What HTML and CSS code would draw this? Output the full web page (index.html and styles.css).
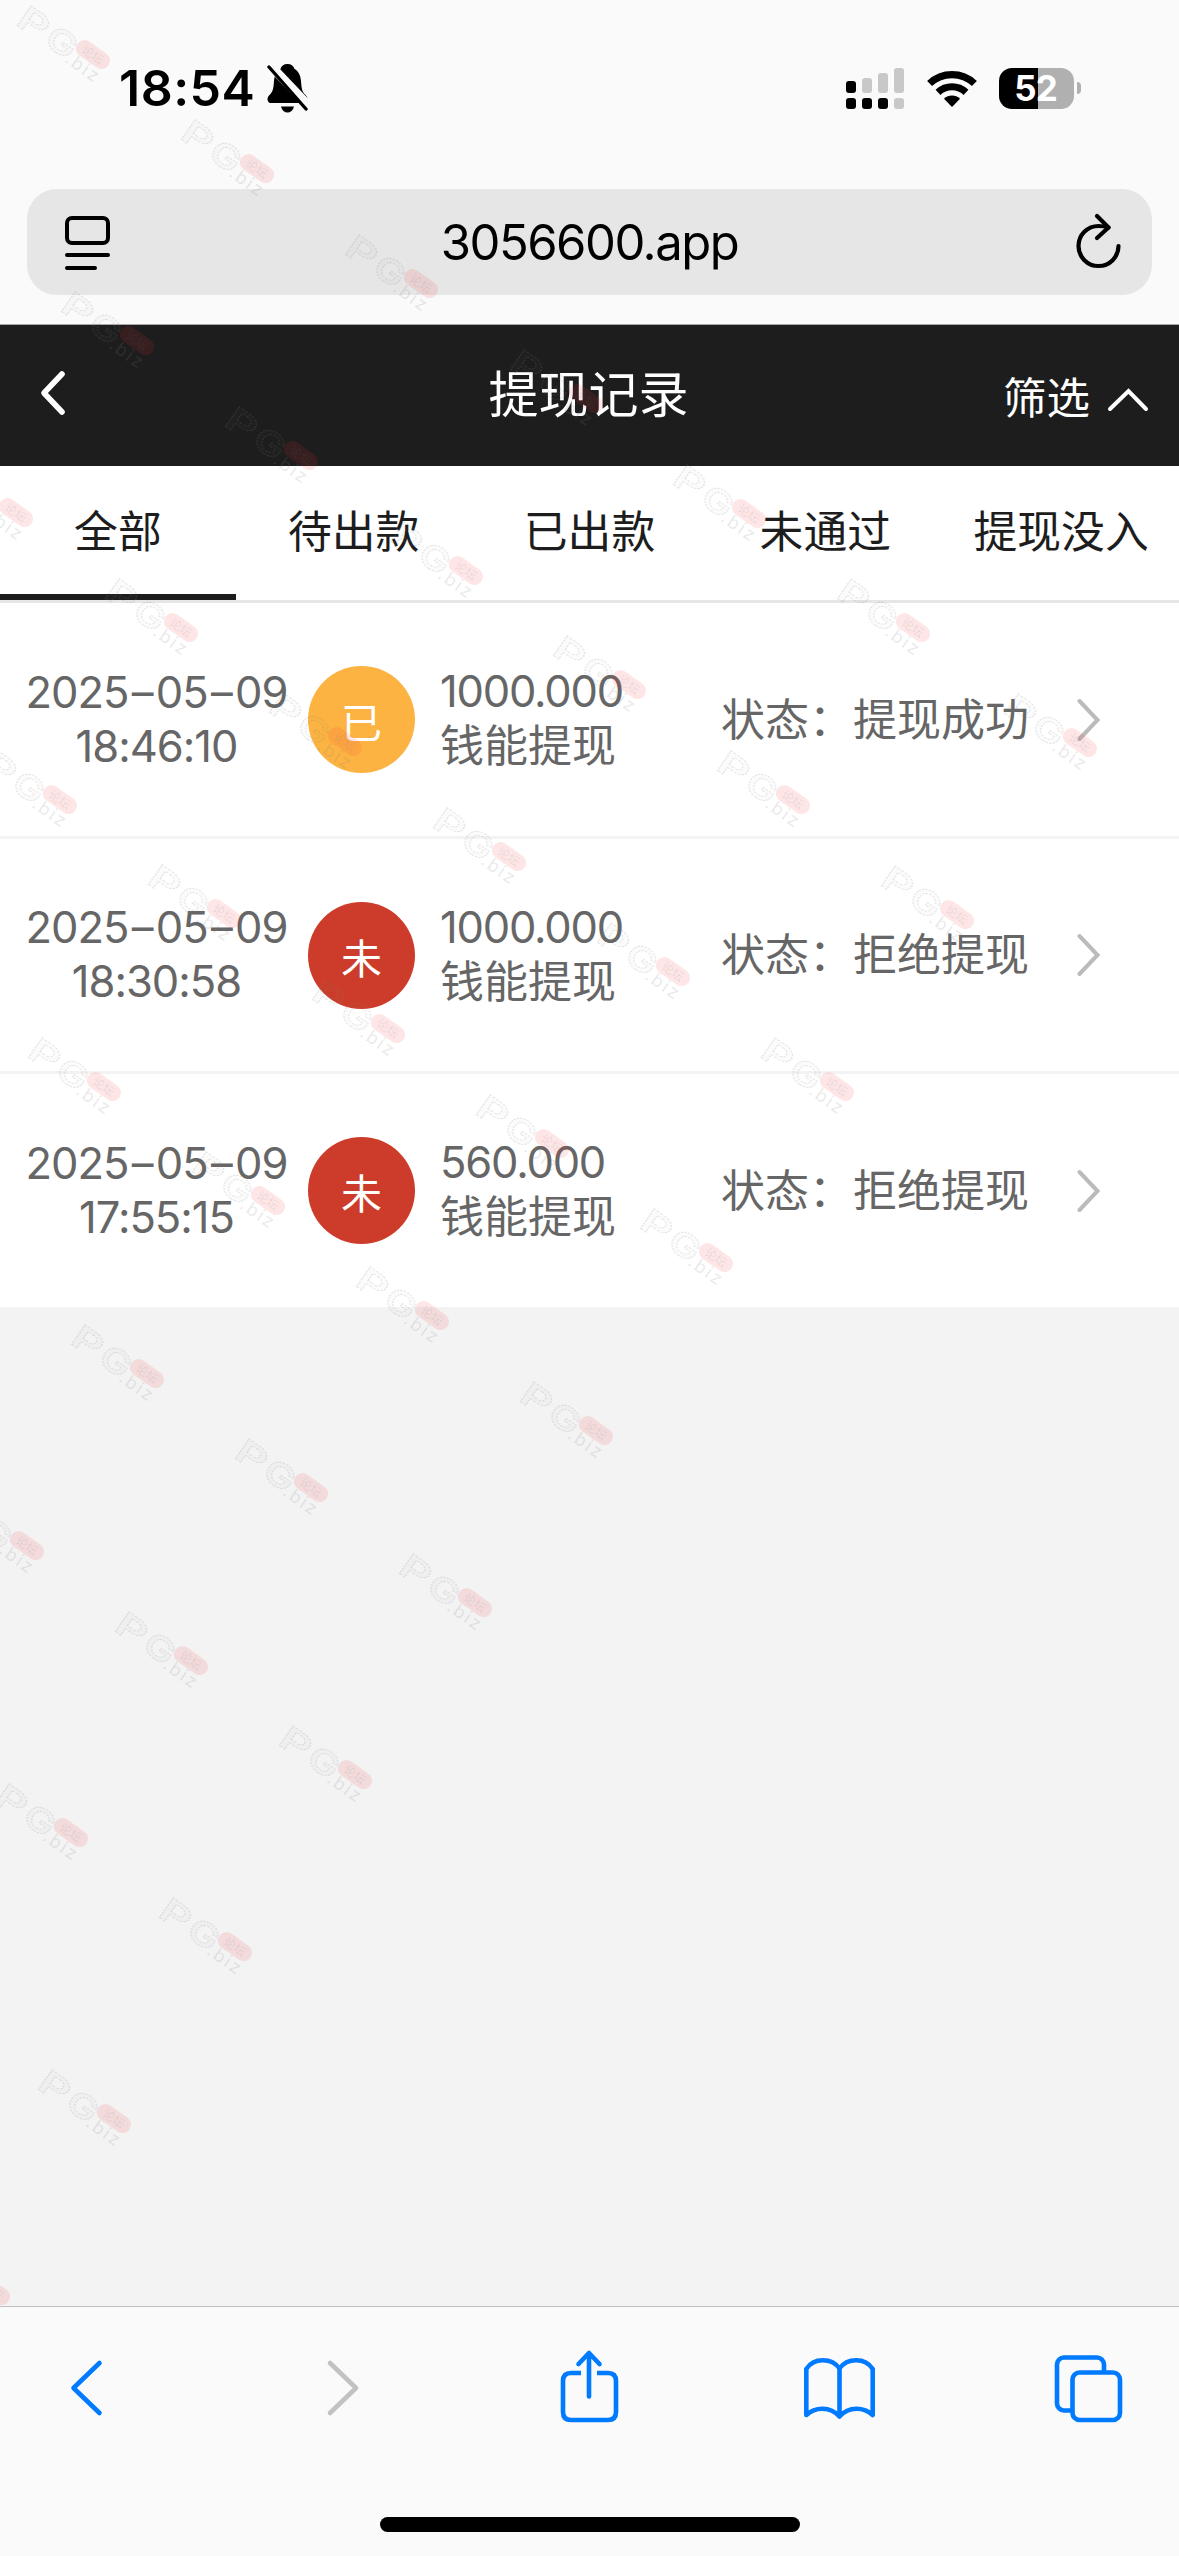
FILE: index.html
```html
<!DOCTYPE html>
<html lang="zh-CN">
<head>
<meta charset="utf-8">
<title>提现记录</title>
<link rel="stylesheet" href="styles.css">
</head>
<body>
<div class="screen">
  <header class="browser-top">
    <div class="status-bar">
      <div class="clock">18:54</div>
      <svg class="bell" viewBox="0 0 42 49" width="42" height="49">
        <path d="M20.500 0c-4 0-6.200 2-7 5-4 2-6 6.500-6.500 12-.5 7-1 10-3.500 13-2 2-3 3.200-3 5 0 2 1 4 3 4h34c2 0 3-2 3-4 0-1.800-1-3-3-5-2.500-3-3-6-3.500-13-.5-5.500-2.500-10-6.500-12-.8-3-3-5-7-5z"/>
        <path d="M14 42.500h13c-1 4-3.500 6-6.500 6s-5.500-2-6.500-6z"/>
        <path d="M2 0L42 42" stroke="#fafafa" stroke-width="9"/>
        <path d="M2 3L39 45" stroke="#000" stroke-width="3.400" stroke-linecap="round"/>
      </svg>
      <div class="indicators">
        <svg viewBox="0 0 58 41" width="58" height="41">
          <g fill="#c8c8c8"><rect x="16" y="10" width="10" height="15" rx="3"/><rect x="32" y="5" width="10" height="20" rx="3"/><rect x="48" y="0" width="10" height="25" rx="3"/><rect x="48" y="30" width="10" height="11" rx="3"/></g>
          <rect x="0" y="13" width="10" height="12" rx="3"/><rect x="0" y="30" width="10" height="11" rx="3"/><rect x="16" y="30" width="10" height="11" rx="3"/><rect x="32" y="30" width="10" height="11" rx="3"/>
        </svg>
        <svg class="wifi" viewBox="0 0 50 37" width="50" height="37">
          <g fill="none" stroke="#000" stroke-width="7.200"><path d="M2.600 13.500A32.500 32.500 0 0 1 47.400 13.500"/><path d="M11 22.300A20.500 20.500 0 0 1 39 22.300"/></g>
          <path d="M25 37l-8-8.300c4.500-4.300 11.500-4.300 16 0z"/>
        </svg>
        <div class="battery"><span>52</span></div>
        <div class="battery-cap"></div>
      </div>
    </div>
    <div class="address-bar">
      <svg viewBox="0 0 46 56" width="46" height="56" fill="none" stroke="#000" stroke-width="4" stroke-linecap="round">
        <rect x="2" y="4" width="41" height="25" rx="5"/><path d="M2 41h41M2 54h28"/>
      </svg>
      <div class="address">3056600.app</div>
      <svg class="reload" viewBox="0 0 46 56" width="46" height="56" fill="none" stroke="#000" stroke-width="4.200" stroke-linecap="round" stroke-linejoin="round">
        <path d="M43.500 33a20 20 0 1 1-20-20q5 0 10 1.500"/><path d="M22 3l11.500 11.500L22 25"/>
      </svg>
    </div>
  </header>

  <nav class="title-bar">
    <svg class="back" viewBox="0 0 26 46" width="26" height="46" fill="none" stroke="#fff" stroke-width="5.600" stroke-linecap="round" stroke-linejoin="round"><path d="M22 4L4 23l18 19"/></svg>
    <h1 class="page-title">提现记录</h1>
    <div class="filter"><span>筛选</span>
      <svg viewBox="0 0 42 24" width="42" height="24" fill="none" stroke="#fff" stroke-width="4" stroke-linecap="round"><path d="M3 21L21.500 3L39 21"/></svg>
    </div>
  </nav>

  <div class="tabs">
    <div class="tab active">全部</div>
    <div class="tab">待出款</div>
    <div class="tab">已出款</div>
    <div class="tab">未通过</div>
    <div class="tab">提现没入</div>
  </div>

  <main class="records">
    <div class="record">
      <div class="when">2025<i>–</i>05<i>–</i>09<br>18:46:10</div>
      <div class="mark paid">已</div>
      <div class="amount"><span class="num">1000.000</span><br>钱能提现</div>
      <div class="state">状态：提现成功</div>
      <svg class="more" viewBox="0 0 24 44" width="24" height="44"><path d="M2.500 3L20.500 22L2.500 41"/></svg>
    </div>
    <div class="record">
      <div class="when">2025<i>–</i>05<i>–</i>09<br>18:30:58</div>
      <div class="mark refused">未</div>
      <div class="amount"><span class="num">1000.000</span><br>钱能提现</div>
      <div class="state">状态：拒绝提现</div>
      <svg class="more" viewBox="0 0 24 44" width="24" height="44"><path d="M2.500 3L20.500 22L2.500 41"/></svg>
    </div>
    <div class="record">
      <div class="when">2025<i>–</i>05<i>–</i>09<br>17:55:15</div>
      <div class="mark refused">未</div>
      <div class="amount"><span class="num">560.000</span><br>钱能提现</div>
      <div class="state">状态：拒绝提现</div>
      <svg class="more" viewBox="0 0 24 44" width="24" height="44"><path d="M2.500 3L20.500 22L2.500 41"/></svg>
    </div>
  </main>

  <footer class="browser-bottom">
    <div class="tools">
      <svg viewBox="0 0 71 80" width="71" height="80"><path d="M45.500 17L19.500 42L45.500 67"/></svg>
      <svg class="disabled" viewBox="0 0 71 80" width="71" height="80"><path d="M26 17L52 42L26 67"/></svg>
      <svg viewBox="0 0 71 80" width="71" height="80"><path stroke-linecap="butt" d="M27 27H17q-8 0-8 8v31q0 8 8 8h37q8 0 8-8V35q0-8-8-8H43"/><path d="M35 50.500V8M24.500 18L35 7L45.500 18"/></svg>
      <svg viewBox="0 0 71 80" width="71" height="80"><path d="M35.500 22.500C28 12 10 11 2.300 23V69C11 61 26 60 35.500 70.500C45 60 60 61 68.700 69V23C61 11 43 12 35.500 22.500V70"/></svg>
      <svg viewBox="0 0 71 80" width="71" height="80"><rect x="3" y="11.500" width="47" height="53" rx="7"/><rect class="front" x="18.500" y="26.500" width="47.500" height="47.500" rx="7"/></svg>
    </div>
    <div class="home-bar"></div>
  </footer>

  <svg class="watermark" viewBox="0 0 1179 2556" width="1179" height="2556" aria-hidden="true">
    <defs>
      <g id="stamp">
        <g transform="translate(14 0) rotate(35)">
          <text class="wm-big" x="-2" y="24" textLength="31" lengthAdjust="spacingAndGlyphs">P</text>
          <text class="wm-big" x="32" y="24" textLength="31" lengthAdjust="spacingAndGlyphs">G</text>
          <rect class="wm-pill" x="61" y="-4" width="38" height="17" rx="8.500"/>
          <text class="wm-cn" x="68" y="9">论坛</text>
          <text class="wm-biz" x="60" y="27" textLength="37">.biz</text>
        </g>
      </g>
    </defs>
    <use href="#stamp" x="16" y="5"/><use href="#stamp" x="180" y="119"/><use href="#stamp" x="344" y="234"/><use href="#stamp" x="509" y="349"/><use href="#stamp" x="672" y="464"/><use href="#stamp" x="836" y="578"/><use href="#stamp" x="1003" y="693"/>
    <use href="#stamp" x="60" y="291"/><use href="#stamp" x="224" y="406"/><use href="#stamp" x="389" y="521"/><use href="#stamp" x="552" y="635"/><use href="#stamp" x="716" y="750"/><use href="#stamp" x="880" y="865"/>
    <use href="#stamp" x="-61" y="463"/><use href="#stamp" x="104" y="578"/><use href="#stamp" x="268" y="692"/><use href="#stamp" x="432" y="807"/><use href="#stamp" x="596" y="922"/><use href="#stamp" x="760" y="1037"/>
    <use href="#stamp" x="-17" y="750"/><use href="#stamp" x="147" y="864"/><use href="#stamp" x="311" y="979"/><use href="#stamp" x="475" y="1094"/><use href="#stamp" x="639" y="1208"/>
    <use href="#stamp" x="27" y="1037"/><use href="#stamp" x="191" y="1151"/><use href="#stamp" x="355" y="1266"/><use href="#stamp" x="519" y="1381"/>
    <use href="#stamp" x="70" y="1324"/><use href="#stamp" x="234" y="1438"/><use href="#stamp" x="398" y="1553"/>
    <use href="#stamp" x="-50" y="1496"/><use href="#stamp" x="114" y="1611"/><use href="#stamp" x="278" y="1725"/>
    <use href="#stamp" x="-6" y="1783"/><use href="#stamp" x="158" y="1897"/>
    <use href="#stamp" x="37" y="2069"/>
    <use href="#stamp" x="-84" y="2241"/>
  </svg>
</div>
</body>
</html>
```
FILE: styles.css
```css
* { box-sizing: border-box; }

body {
  margin: 0;
  font-family: Inter, "Noto Sans CJK SC", sans-serif;
}

svg { display: block; flex: none; }

.screen {
  position: relative;
  display: flex;
  flex-direction: column;
  width: 1179px;
  height: 2556px;
  overflow: hidden;
  background: #f3f3f3;
}

/* Status bar and address field */
.browser-top {
  height: 325px;
  background: #fafafa;
  border-bottom: 1px solid #a8a8a8;
}

.status-bar {
  display: flex;
  align-items: center;
  height: 176px;
  padding: 0 98px 0 119px;
}

.clock {
  width: 148px;
  font-size: 50px;
  font-weight: 600;
  letter-spacing: 0.5px;
  white-space: nowrap;
}

.indicators {
  display: flex;
  align-items: center;
  margin-left: auto;
}

.wifi { margin: 0 22px 0 23px; }

.battery {
  display: flex;
  align-items: center;
  justify-content: center;
  width: 75px;
  height: 41px;
  padding-right: 2px;
  border-radius: 13px;
  background: linear-gradient(90deg, #000 39px, #b0b0b0 39px);
  color: #fff;
  font-size: 35px;
  font-weight: 700;
  letter-spacing: -1px;
}

.battery-cap {
  width: 4px;
  height: 12px;
  margin-left: 3px;
  border-radius: 0 4px 4px 0;
  background: #b0b0b0;
}

.address-bar {
  display: flex;
  align-items: center;
  justify-content: space-between;
  height: 106px;
  margin: 13px 27px 0;
  padding: 0 31px 0 38px;
  border-radius: 30px;
  background: #e6e6e6;
}

.address {
  margin-right: 7px;
  font-size: 49px;
  letter-spacing: -1.5px;
}

.reload { margin-bottom: 3px; }

/* Page title */
.title-bar {
  display: grid;
  grid-template-columns: 1fr auto 1fr;
  align-items: center;
  height: 141px;
  padding: 0 30px 0 40px;
  background: #1d1d1d;
  color: #fff;
}

.back { margin-bottom: 6px; }

.page-title {
  margin: 0 0 0 -12px;
  font-size: 50px;
  font-weight: 400;
  line-height: 141px;
}

.filter {
  display: flex;
  align-items: center;
  justify-content: flex-end;
  gap: 17px;
  font-size: 43.500px;
}

.filter svg { margin-top: 9px; }

/* Tabs */
.tabs {
  display: grid;
  grid-template-columns: repeat(5, 1fr);
  height: 137px;
  background: #fff;
  border-bottom: 3px solid #e6e6e6;
}

.tab {
  padding-top: 34px;
  font-size: 43.800px;
  line-height: 66px;
  text-align: center;
  white-space: nowrap;
  color: #1d1d1d;
}

.tab.active { border-bottom: 6px solid #1d1d1d; }

/* Withdrawal records */
.record {
  display: flex;
  align-items: center;
  height: 235px;
  padding-left: 16px;
  background: #fff;
  border-bottom: 3px solid #f3f3f3;
  color: #666;
  font-size: 44px;
  line-height: 55px;
  white-space: nowrap;
}

.record:first-child { height: 236px; }

.record:last-child {
  height: 233px;
  border-bottom: 0;
}

.when {
  width: 281px;
  margin-top: -2px;
  font-size: 43.500px;
  line-height: 54px;
  letter-spacing: -1px;
  text-align: center;
}

.when i {
  display: inline-block;
  margin: 0 3.300px;
  font-style: normal;
}

.mark {
  width: 107px;
  height: 107px;
  margin-left: 11px;
  padding-top: 4px;
  border-radius: 50%;
  color: #fff;
  font-size: 41px;
  line-height: 107px;
  text-align: center;
}

.paid { background: #fcb342; }
.refused { background: #cd3c2a; }

.amount {
  width: 281px;
  margin: -1px 0 0 25px;
}

.num {
  font-size: 43.500px;
  letter-spacing: -1.2px;
}

.state {
  width: 356px;
  padding-top: 1px;
}

.more {
  fill: none;
  stroke: #bbb;
  stroke-width: 4;
  stroke-linecap: round;
}

/* Browser toolbar */
.browser-bottom {
  display: flex;
  flex-direction: column;
  align-items: center;
  height: 250px;
  margin-top: auto;
  border-top: 1px solid #c0c0c0;
  background: #fafafa;
}

.tools {
  display: flex;
  justify-content: space-between;
  width: 100%;
  margin-top: 39px;
  padding: 0 54px;
  fill: none;
  stroke: #007aff;
  stroke-width: 4.600;
  stroke-linecap: round;
  stroke-linejoin: round;
}

.disabled { stroke: #c2c2c2; }
.front { fill: #fafafa; }

.home-bar {
  width: 420px;
  height: 15px;
  margin-top: 91px;
  border-radius: 8px;
  background: #000;
}

/* Diagonal watermark laid over the whole screen */
.watermark {
  position: absolute;
  top: 0;
  left: 0;
  pointer-events: none;
}

.wm-big {
  fill: rgba(128, 128, 128, 0.05);
  stroke: rgba(128, 128, 128, 0.2);
  stroke-width: 1;
  stroke-dasharray: 2 1;
  font-size: 33px;
  font-weight: 600;
}

.wm-pill { fill: rgba(245, 50, 60, 0.12); }

.wm-cn {
  fill: rgba(110, 110, 110, 0.14);
  font-size: 12px;
}

.wm-biz {
  fill: rgba(128, 128, 128, 0.18);
  font-size: 18px;
}
```
